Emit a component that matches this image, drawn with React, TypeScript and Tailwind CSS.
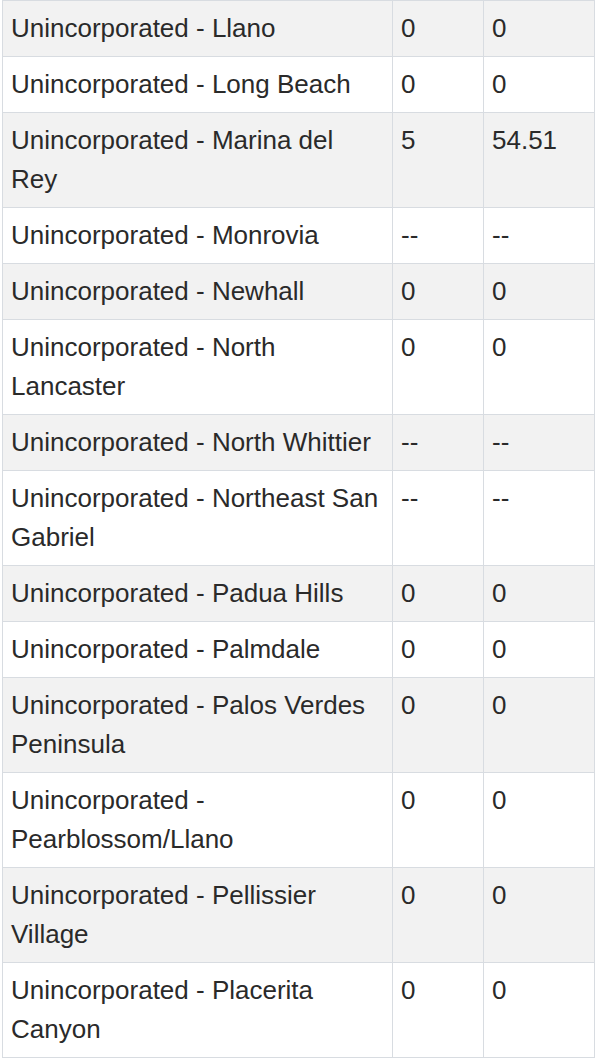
import React from 'react';

type Row = { name: string; a: string; b: string };

const rows: Row[] = [
  { name: 'Unincorporated - Llano', a: '0', b: '0' },
  { name: 'Unincorporated - Long Beach', a: '0', b: '0' },
  { name: 'Unincorporated - Marina del Rey', a: '5', b: '54.51' },
  { name: 'Unincorporated - Monrovia', a: '--', b: '--' },
  { name: 'Unincorporated - Newhall', a: '0', b: '0' },
  { name: 'Unincorporated - North Lancaster', a: '0', b: '0' },
  { name: 'Unincorporated - North Whittier', a: '--', b: '--' },
  { name: 'Unincorporated - Northeast San Gabriel', a: '--', b: '--' },
  { name: 'Unincorporated - Padua Hills', a: '0', b: '0' },
  { name: 'Unincorporated - Palmdale', a: '0', b: '0' },
  { name: 'Unincorporated - Palos Verdes Peninsula', a: '0', b: '0' },
  { name: 'Unincorporated - Pearblossom/Llano', a: '0', b: '0' },
  { name: 'Unincorporated - Pellissier Village', a: '0', b: '0' },
  { name: 'Unincorporated - Placerita Canyon', a: '0', b: '0' },
];

const cell = 'border border-[#d8dce1] px-2 py-2 align-top';

const App: React.FC = () => {
  return (
    <div className="bg-white w-[600px] h-[1058px] overflow-hidden font-['Liberation_Sans',Arial,sans-serif] text-[26px] leading-[39px] text-[#2a2a2a]">
      <table className="ml-[2px] w-[592px] table-fixed border-collapse">
        <colgroup>
          <col className="w-[390px]" />
          <col className="w-[91px]" />
          <col className="w-[111px]" />
        </colgroup>
        <tbody>
          {rows.map((r, i) => (
            <tr key={r.name} className={i % 2 === 0 ? 'bg-[#f2f2f2]' : 'bg-white'}>
              <td className={cell}>{r.name}</td>
              <td className={cell}>{r.a}</td>
              <td className={cell}>{r.b}</td>
            </tr>
          ))}
        </tbody>
      </table>
    </div>
  );
};

export default App;
